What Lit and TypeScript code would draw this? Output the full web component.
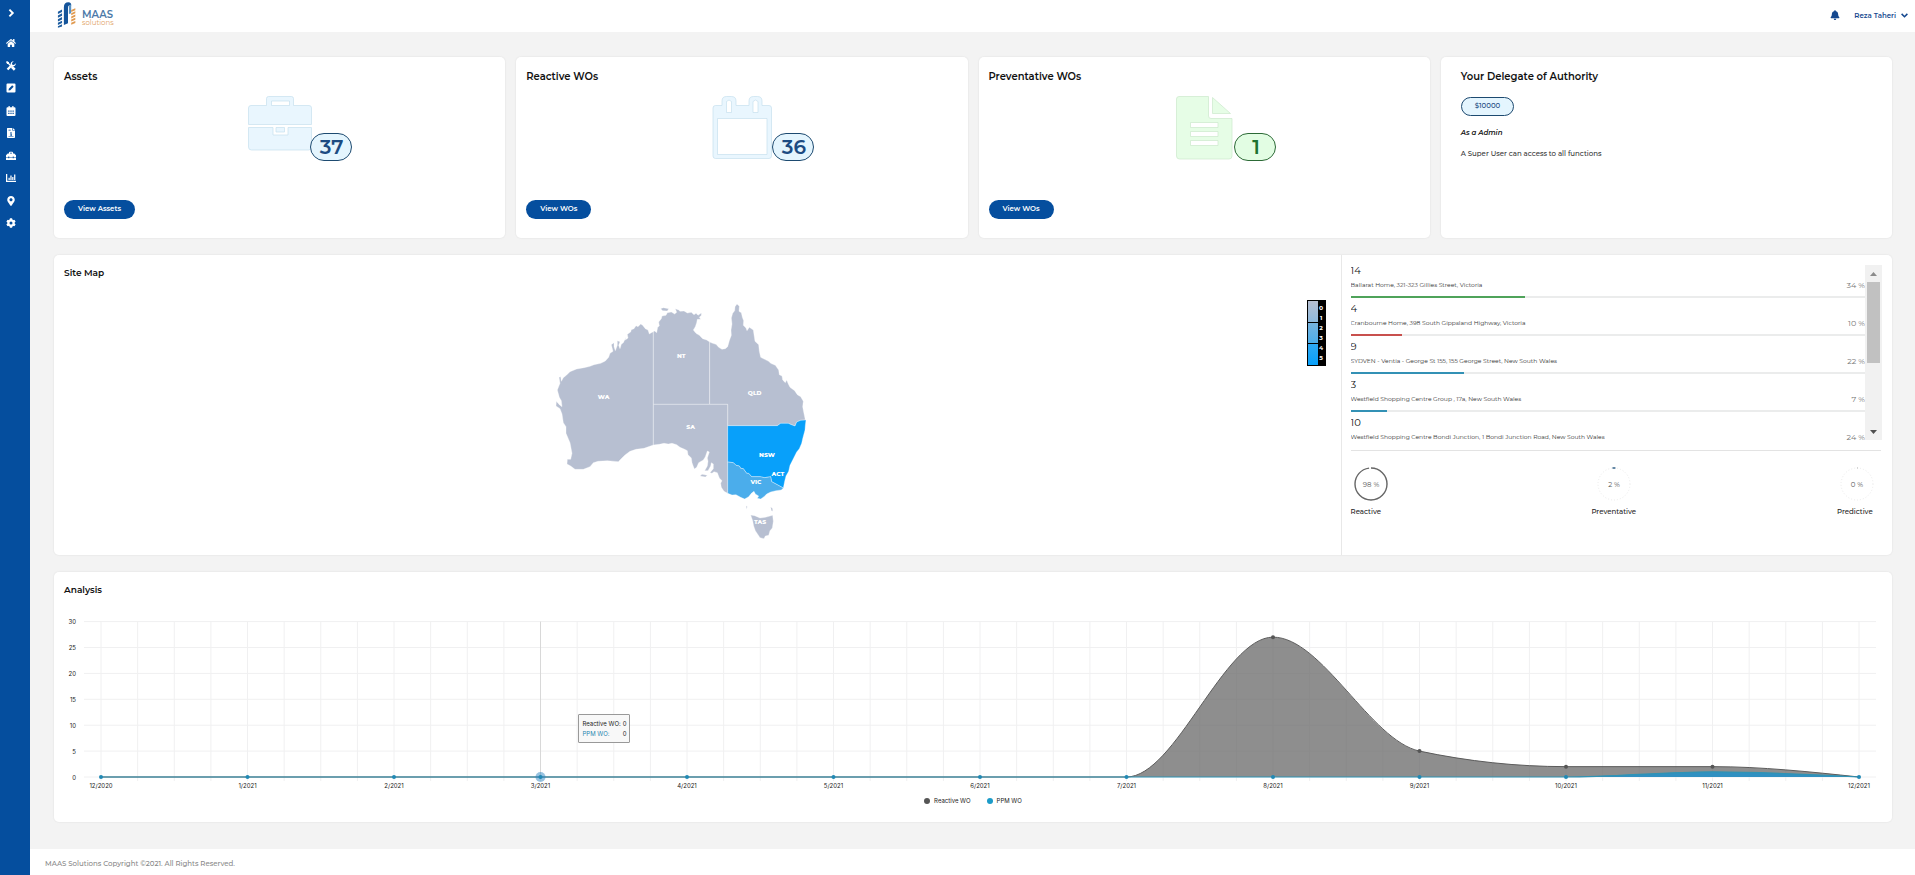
import { LitElement, html, svg, css } from "lit";
import { customElement } from "lit/decorators.js";
import { styleMap } from "lit/directives/style-map.js";

const FONT = css`Montserrat, Inter, "Open Sans", sans-serif`;
const CHART_FONT = css`Inter, "Liberation Sans", sans-serif`;

/* ---------- icons ---------- */
const icons = {
  chevronRight: svg`<svg viewBox="0 0 10 10" class="icon"><path d="M3.4 1.6 6.8 5 3.4 8.4" fill="none" stroke="currentColor" stroke-width="1.9"/></svg>`,
  chevronDown: svg`<svg viewBox="0 0 10 10" class="icon"><path d="M1.8 3.2 5 6.4 8.2 3.2" fill="none" stroke="currentColor" stroke-width="1.7"/></svg>`,
  home: svg`<svg viewBox="0 0 576 512" class="icon"><path fill="currentColor" d="M280.37 148.26L96 300.11V464a16 16 0 0 0 16 16l112.06-.29a16 16 0 0 0 15.92-16V368a16 16 0 0 1 16-16h64a16 16 0 0 1 16 16v95.64a16 16 0 0 0 16 16.05L464 480a16 16 0 0 0 16-16V300L295.67 148.26a12.19 12.19 0 0 0-15.3 0zM571.6 251.47L488 182.56V44.05a12 12 0 0 0-12-12h-56a12 12 0 0 0-12 12v72.61L318.47 43a48 48 0 0 0-61 0L4.34 251.47a12 12 0 0 0-1.6 16.9l25.5 31A12 12 0 0 0 45.15 301l235.22-193.74a12.19 12.19 0 0 1 15.3 0L530.9 301a12 12 0 0 0 16.9-1.6l25.5-31a12 12 0 0 0-1.7-16.93z"/></svg>`,
  tools: svg`<svg viewBox="0 0 20 20" class="icon"><g fill="none" stroke="currentColor"><path d="M3 3 9 9" stroke-width="2.6"/><path d="M11.5 11.5 17.5 17.5" stroke-width="5"/><path d="M3 17.2 12 8" stroke-width="4.4"/></g><path fill="currentColor" d="M0 2 2 0l4 2.4V5L5 6H2.400zM19.600 4.500 16 8l-3.500-.6L12 4l3.500-3.600A6 6 0 0 0 9.500 8l3 3a6 6 0 0 0 7.100-6.500z"/></svg>`,
  pen: svg`<svg viewBox="0 0 20 20" class="icon"><path fill="currentColor" fill-rule="evenodd" d="M3 1h14a2 2 0 0 1 2 2v14a2 2 0 0 1-2 2H3a2 2 0 0 1-2-2V3a2 2 0 0 1 2-2zM5 15l3.500-.6 6.800-6.800-2.900-2.900-6.800 6.800z"/></svg>`,
  calendar: svg`<svg viewBox="0 0 20 20" class="icon"><path fill="currentColor" fill-rule="evenodd" d="M5 0h2.500v2.500h5V0H15v2.500h2a2 2 0 0 1 2 2V18a2 2 0 0 1-2 2H3a2 2 0 0 1-2-2V4.500a2 2 0 0 1 2-2h2zM4.500 9v2.500H7V9zm4.300 0v2.500h2.400V9zM13 9v2.500h2.500V9zm-8.500 4.500V16H7v-2.500zm4.300 0V16h2.400v-2.500zm4.200 0V16h2.500v-2.500z"/></svg>`,
  invoice: svg`<svg viewBox="0 0 20 20" class="icon"><path fill="currentColor" fill-rule="evenodd" d="M3 0h9.500v5H18v13.500a1.500 1.500 0 0 1-1.500 1.500h-13A1.500 1.500 0 0 1 2 18.500V1a1 1 0 0 1 1-1zm10.800 0L18 4h-4.200zM5 3.500V5h4.500V3.500zM8 9v2h4V9zm1 3v4h2.500v-4zM5 17v1h10v-1z"/></svg>`,
  toolbox: svg`<svg viewBox="0 0 20 20" class="icon"><path fill="currentColor" fill-rule="evenodd" d="M6 5V3.500A2 2 0 0 1 8 1.500h4a2 2 0 0 1 2 2V5h2.500L20 8.500V12h-4.500v-1.200h-2V12h-7v-1.200h-2V12H0V8.500L3.500 5zm2 0h4V3.500H8zM0 13.200h4.500v1.300h2v-1.300h7v1.300h2v-1.300H20V18H0z"/></svg>`,
  chart: svg`<svg viewBox="0 0 20 20" class="icon"><path fill="currentColor" d="M0 2h2.500v13.500H20V18H0zM5 9.500h2.500v4.500H5zM8.700 5h2.500v9H8.700zM12.400 8h2.500v6h-2.500zM16.200 3h2.500v11h-2.500z"/></svg>`,
  pin: svg`<svg viewBox="-64 0 512 512" class="icon"><path fill="currentColor" d="M172.268 501.67C26.97 291.031 0 269.413 0 192 0 85.961 85.961 0 192 0s192 85.961 192 192c0 77.413-26.97 99.031-172.268 309.67-9.535 13.774-29.93 13.773-39.464 0zM192 272c44.183 0 80-35.817 80-80s-35.817-80-80-80-80 35.817-80 80 35.817 80 80 80z"/></svg>`,
  gear: svg`<svg viewBox="0 0 20 20" class="icon"><g fill="none" stroke="currentColor"><circle cx="10" cy="10" r="5.200" stroke-width="4.400"/><path stroke-width="4.600" d="M10 .6v4M10 15.400v4M1.900 5.300l3.400 2M14.700 12.700l3.400 2M1.900 14.700l3.400-2M14.700 7.300l3.400-2"/></g></svg>`,
  bell: svg`<svg viewBox="0 0 448 512" class="icon"><path fill="currentColor" d="M224 512c35.32 0 63.97-28.65 63.97-64H160.03c0 35.35 28.65 64 63.97 64zm215.39-149.71c-19.32-20.76-55.47-51.99-55.47-154.29 0-77.7-54.48-139.9-127.94-155.16V32c0-17.67-14.32-32-31.98-32s-31.98 14.33-31.98 32v20.84C118.56 68.1 64.08 130.3 64.08 208c0 102.3-36.15 133.53-55.47 154.29-6 6.45-8.66 14.16-8.61 21.71.11 16.4 12.98 32 32.1 32h383.8c19.12 0 32-15.6 32.1-32 .05-7.55-2.61-15.27-8.61-21.71z"/></svg>`,
};

const art = {
  briefcase: svg`<svg viewBox="0 0 64 64" class="art blue"><path d="M.5 28.500V12q0-2.500 2.500-2.500h15.500V2.500q0-2 2-2H43.500q2 0 2 2v7H61q2.500 0 2.500 2.500v16.500zM23.500 5v4.500h18V5z"/><path d="M.5 31.500H25v7.500h15v-7.500h23.500V51q0 3-3 3h-57q-3 0-3-3z"/><path d="M28 31.500h8.500v4.500H28z"/></svg>`,
  calendar: svg`<svg viewBox="0 0 64 64" class="art blue"><path fill-rule="evenodd" d="M3 12q0-2.500 2.500-2.500H12V5q0-4.500 4.500-4.500h5Q26 .5 26 5v4.500h13V5q0-4.500 4.500-4.500h4Q52 .5 52 5v4.500h7q2.500 0 2.500 2.500v48q0 2.500-2.500 2.500H5.500Q3 62.500 3 60zM16.500 16.500h5v-11q-2.500-3-5 0zM43 16.500h5v-11q-2.500-3-5 0zM7.500 22.500v36h49.500v-36z"/></svg>`,
  file: svg`<svg viewBox="0 0 64 64" class="art green"><path fill-rule="evenodd" d="M4.500 3q0-2.500 2.500-2.500h29.500V20q0 2.500 2.500 2.500h21V60q0 3-3 3H7.500q-3 0-3-3zM18.500 26.500v5H46v-5zM18.500 35.500v5H46v-5zM18.500 44.500v5H46v-5z"/><path d="M40.500 1.500v16h18z"/></svg>`,
};

/* Three towers: striped blue, solid blue with a curved crown, striped orange. */
const logo = svg`<svg viewBox="0 0 24 30" class="logo-mark">
  <path fill="#1c5c9f" d="M1 11.500l4.500-2.500v2.600L1 14zM1 15.500l4.500-2.300v2.600L1 18zM1 19.500l4.500-2.300v2.600L1 22zM1 23.500l4.500-2.300v2.600L1 26zM1 27.200l4.500-2v2.300L1 29z"/>
  <path fill="#14549a" d="M7.500 6.500Q7.500 1 12.500 1q3 0 3 3.500h-2q-1.500 0-1.500 2.500v17l-4.500 2z"/>
  <path fill="#5b93c4" d="M13 6.500q0-3 2.500-3v9.500L13 14z"/>
  <path fill="#e09a50" d="M15.500 9.500l4.500-2v2.200l-4.500 2zM15.500 13l4.500-2v2.200l-4.500 2zM15.500 16.500l4.500-2v2.200l-4.500 2zM15.500 20l4.500-2v2.200l-4.500 2zM15.500 23.500l4.500-2v2.200l-4.500 2z"/>
</svg>`;

/* ---------- data ---------- */
const navItems: [string, unknown][] = [
  ["Home", icons.home],
  ["Work orders", icons.tools],
  ["Edit", icons.pen],
  ["Calendar", icons.calendar],
  ["Invoices", icons.invoice],
  ["Assets", icons.toolbox],
  ["Reports", icons.chart],
  ["Sites", icons.pin],
  ["Settings", icons.gear],
];

const stats = [
  { title: "Assets", value: 37, action: "View Assets", art: art.briefcase, tone: "blue" },
  { title: "Reactive WOs", value: 36, action: "View WOs", art: art.calendar, tone: "blue" },
  { title: "Preventative WOs", value: 1, action: "View WOs", art: art.file, tone: "green" },
];

const sites = [
  { count: 14, name: "Ballarat Home, 321-323 Gillies Street, Victoria", share: 34, color: "#4fa35a" },
  { count: 4, name: "Cranbourne Home, 398 South Gippsland Highway, Victoria", share: 10, color: "#c8504d" },
  { count: 9, name: "SYDVEN - Ventia - George St 155, 155 George Street, New South Wales", share: 22, color: "#3391b5" },
  { count: 3, name: "Westfield Shopping Centre Group , 17a, New South Wales", share: 7, color: "#3391b5" },
  { count: 10, name: "Westfield Shopping Centre Bondi Junction, 1 Bondi Junction Road, New South Wales", share: 24, color: "#3391b5" },
];

const rings = [
  { label: "Reactive", value: 98, color: "#666" },
  { label: "Preventative", value: 2, color: "#36648b" },
  { label: "Predictive", value: 0, color: "#aaa" },
];

const regions = [
  { name: "WA", x: 221, y: 350, fill: "#b7bfd1", d: "M370 155 364 158 358 162 354 150 346 146 338 136 332 132 324 140 318 137 312 146 304 149 302 156 292 163 294 174 286 180 288 172 280 188 274 193 270 206 266 196 270 185 262 182 262 196 256 212 252 200 252 188 244 194 249 214 240 220 236 232 226 243 212 250 192 254 180 259 162 263 140 267 120 275 110 285 100 293 94 304 92 290 87 292 90 310 82 330 88 352 94 362 96 380 88 374 79 364 78 378 90 386 96 402 100 428 108 440 108 460 120 488 126 520 122 538 112 538 111 552 122 558 135 568 160 568 180 560 190 548 204 544 232 542 265 545 275 535 285 525 300 514 318 508 342 505 370 495z" },
  { name: "NT", x: 454, y: 228, fill: "#b7bfd1", d: "M370 155 374 153 380 158 383 142 388 138 386 126 394 116 396 108 408 106 412 98 424 96 434 102 440 97 436 86 446 90 450 94 462 93 472 99 484 97 492 104 498 100 504 106 514 99 514 106 508 112 512 118 502 118 500 128 496 140 490 150 498 160 508 166 518 176 530 180 539 186V373H370zM392 86 400 83 416 86 412 93 398 92z" },
  { name: "QLD", x: 674, y: 339, fill: "#b7bfd1", d: "M539 186 548 190 558 193 566 202 576 208 586 206 593 200 598 182 604 166 603 150 606 132 604 114 608 100 614 92 615 80 621 72 628 79 627 94 634 98 637 112 641 122 640 136 648 144 651 152 658 142 670 150 672 164 675 184 686 194 688 214 692 232 704 238 716 244 722 250 736 256 746 270 748 284 756 288 758 300 766 308 770 300 775 312 780 322 794 332 802 344 812 350 820 364 818 380 821 396 826 420 812 421 800 426 795 438 784 434 775 430 752 430 742 437H593V373H539z" },
  { name: "SA", x: 482, y: 440, fill: "#b7bfd1", d: "M370 373H593V640L582 634 574 622 572 610 576 602 568 594 562 578 552 575 546 580 540 578 550 566 550 552 544 548 542 558 534 572 524 572 532 558 534 544 532 534 538 516 532 513 526 530 520 540 506 548 500 562 493 567 486 548 484 534 474 524 472 512 464 508 450 502 440 494 426 490 415 492 402 490 388 493 370 495zM510 588 516 583 532 586 526 591z" },
  { name: "NSW", x: 711, y: 524, fill: "#08a0fa", d: "M593 437H742L752 430 775 430 784 434 795 438 800 426 812 421 828 420 826 436 825 450 818 476 815 490 808 506 800 516 788 540 780 556 776 574 768 588 764 604 760 624 725 605 722 590 704 593 690 590 665 590 656 580 650 580 640 566 632 565 628 558 618 556 610 548 593 546z" },
  { name: "VIC", x: 678, y: 605, fill: "#4badeb", d: "M593 546 610 548 618 556 628 558 632 565 640 566 650 580 656 580 665 590 690 590 704 593 722 590 725 605 760 624 754 630 738 632 722 636 710 642 702 650 692 657 682 655 686 648 676 642 672 634 664 640 656 650 644 657 632 652 618 644 606 645 593 640z" },
  { name: "TAS", x: 690, y: 725, fill: "#b7bfd1", d: "M662 705 674 707 690 714 706 712 728 706 730 724 727 744 720 752 716 766 706 768 702 776 690 773 684 764 676 752 671 738 668 722zM648 677 652 680 650 688zM722 680 728 686 728 694 724 692z" },
];

const months = ["12/2020", "1/2021", "2/2021", "3/2021", "4/2021", "5/2021", "6/2021", "7/2021", "8/2021", "9/2021", "10/2021", "11/2021", "12/2021"];
const reactive = [0, 0, 0, 0, 0, 0, 0, 0, 27, 5, 2, 2, 0];
const ppm = [0, 0, 0, 0, 0, 0, 0, 0, 0, 0, 0, 1, 0];

/* ---------- chart geometry ---------- */
const STEP = 146.5;
const X0 = 37;
const BASE = 165;
const UNIT = 5.18;
const px = (i: number) => X0 + i * STEP;
const py = (v: number) => BASE - v * UNIT;

/** Monotone cubic through the values, one point a month. */
function curve(values: number[]): string {
  const n = values.length;
  const s = values.slice(1).map((v, i) => v - values[i]);
  const t = values.map((_, i) => {
    if (i === 0 || i === n - 1) return 0;
    const a = s[i - 1];
    const b = s[i];
    if (a * b <= 0) return 0;
    return Math.sign(a) * 2 * Math.min(Math.abs(a), Math.abs(b), Math.abs(a + b) / 4);
  });
  t[n - 1] = (3 * s[n - 2] - t[n - 2]) / 2;
  let d = `M${px(0)} ${py(values[0])}`;
  for (let i = 0; i < n - 1; i++) {
    d += `C${px(i + 1 / 3)} ${py(values[i] + t[i] / 3)} ${px(i + 2 / 3)} ${py(values[i + 1] - t[i + 1] / 3)} ${px(i + 1)} ${py(values[i + 1])}`;
  }
  return d;
}

@customElement("site-map")
export class SiteMap extends LitElement {
  static styles = css`
    :host { display: grid; grid-template-columns: 1fr 334px 1fr; padding: 0 15px; align-items: start; font-family: ${FONT}; }
    .map { grid-column: 2; display: block; width: 100%; }
    .map path { stroke: #fff; stroke-width: 1; stroke-linejoin: round; }
    .map text { font-size: 18px; font-weight: 800; fill: #fff; text-anchor: middle; dominant-baseline: central; }
    .legend { justify-self: end; display: grid; grid-template-columns: 10px 7px; padding: 1px; background: #000; color: #fff; }
    .scale { display: grid; grid-template-rows: repeat(3, 1fr); row-gap: 1px; }
    .scale span:nth-child(1) { background: linear-gradient(#b7bfd1, #8db9dd); }
    .scale span:nth-child(2) { background: linear-gradient(#76b3df, #4caeea); }
    .scale span:nth-child(3) { background: linear-gradient(#2ea9f4, #08a0fa); }
    .nums { display: grid; margin: 0; padding: 2px 0; list-style: none; font-size: 6px; line-height: 10px; font-weight: 700; text-align: center; }
  `;
  render() {
    return html`
      <svg class="map" viewBox="0 60 1002 738" role="img" aria-label="Map of Australia">
        ${regions.map((r) => svg`<path d=${r.d} fill=${r.fill}></path>`)}
        ${regions.map((r) => svg`<text x=${r.x} y=${r.y}>${r.name}</text>`)}
        <text x="744" y="582">ACT</text>
      </svg>
      <div class="legend">
        <div class="scale"><span></span><span></span><span></span></div>
        <ul class="nums">${[0, 1, 2, 3, 4, 5].map((n) => html`<li>${n}</li>`)}</ul>
      </div>`;
  }
}

@customElement("site-list")
export class SiteList extends LitElement {
  static styles = css`
    :host { display: block; font-family: ${FONT}; }
    .viewport { display: grid; grid-template: 100% / 1fr 17px; height: 175px; overflow: hidden; }
    .list { margin: 0; padding: 0; list-style: none; }
    .item { display: grid; grid-template-columns: 1fr auto; height: 38px; align-content: start; }
    .count { grid-column: 1 / -1; font-size: 10px; line-height: 12px; color: #111; }
    .name { font-size: 6px; line-height: 16px; color: #333; white-space: nowrap; }
    .share { font-size: 8px; line-height: 16px; color: #777; }
    .track { grid-column: 1 / -1; height: 2px; margin-top: 3px; background: #ebecec; }
    .fill { height: 100%; }
    .scroll { display: flex; flex-direction: column; background: #f1f1f1; }
    .arrow { display: grid; place-items: center; height: 17px; color: #505050; }
    .arrow svg { width: 7px; height: 4px; }
    .up { color: #8b8b8b; }
    .thumb { height: 81px; margin: 0 2px; background: #c1c1c1; }
    .down { margin-top: auto; }
    .rings { display: flex; justify-content: space-between; margin-right: 1px; border-top: 1px solid #e3e3e3; padding: 15px 4px 0 0; margin-top: 10px; }
    .ring { min-width: 40px; display: grid; }
    .ring svg { width: 40px; height: 36px; justify-self: center; }
    .ring text { font-size: 7px; fill: #555; text-anchor: middle; dominant-baseline: central; }
    .label { font-size: 7px; line-height: 20px; color: #222; font-weight: 500; }
  `;
  render() {
    return html`
      <div class="viewport">
        <ul class="list">
          ${sites.map((s) => html`<li class="item">
            <span class="count">${s.count}</span>
            <span class="name">${s.name}</span><span class="share">${s.share} %</span>
            <div class="track"><div class="fill" style=${styleMap({ width: `${s.share}%`, background: s.color })}></div></div>
          </li>`)}
        </ul>
        <div class="scroll" aria-hidden="true">
          <span class="arrow up"><svg viewBox="0 0 7 4"><path d="M0 4 3.500 0 7 4z" fill="currentColor"/></svg></span>
          <span class="thumb"></span>
          <span class="arrow down"><svg viewBox="0 0 7 4"><path d="M0 0h7L3.500 4z" fill="currentColor"/></svg></span>
        </div>
      </div>
      <div class="rings">
        ${rings.map((r) => html`<div class="ring">
          <svg viewBox="0 0 40 36">
            <circle cx="20" cy="18" r="16" fill="none" stroke="#ececec" stroke-dasharray="1 2"></circle>
            <circle cx="20" cy="18" r="16" fill="none" stroke=${r.color} stroke-width="1.400" pathLength="100"
              stroke-linecap=${r.value > 0 && r.value < 50 ? "round" : "butt"}
              stroke-dasharray="${Math.max(r.value, 0.6)} 100" transform="rotate(${-90 - (r.value < 50 ? r.value * 1.8 : 0)} 20 18)"></circle>
            <text x="20" y="18">${r.value} %</text>
          </svg>
          <span class="label">${r.label}</span>
        </div>`)}
      </div>`;
  }
}

@customElement("analysis-chart")
export class AnalysisChart extends LitElement {
  static styles = css`
    :host { display: block; position: relative; font-family: ${CHART_FONT}; }
    .plot { display: block; width: 100%; }
    .grid { stroke: #f0f0f1; stroke-width: 1; fill: none; }
    .cursor { stroke: #d8d8d8; stroke-width: 1; }
    .plot text { font-size: 6px; fill: #222; dominant-baseline: central; }
    .y { text-anchor: end; }
    .x { text-anchor: middle; }
    .legend { display: flex; justify-content: center; gap: 16px; font-size: 6px; line-height: 8px; color: #222; margin-top: 5px; }
    .key { display: flex; align-items: center; gap: 4px; }
    .dot { width: 6px; height: 6px; border-radius: 50%; background: #555; }
    .dot.ppm { background: #1c9bc8; }
    .tip { position: absolute; left: 28.3%; top: 102px; width: 52px; height: 29px; box-sizing: border-box; border: 1px solid #999; border-radius: 1px; background: #f8f8f8; padding: 4px 3px; font-size: 6px; line-height: 10px; color: #222; }
    .line { display: flex; justify-content: space-between; white-space: nowrap; }
    .line .ppm { color: #1f86b0; }
  `;
  render() {
    const area = (v: number[]) => `${curve(v)}V${BASE}H${px(0)}Z`;
    return html`
      <svg class="plot" viewBox="0 0 1818 180" role="img" aria-label="Work orders a month">
        ${[0, 5, 10, 15, 20, 25, 30].map((v) => svg`
          <path class="grid" d="M20 ${py(v)}H1812"></path>
          <text class="y" x="12" y=${py(v)}>${v}</text>`)}
        ${Array.from({ length: 49 }, (_, i) => svg`<path class="grid" d="M${px(i / 4)} ${py(30)}V${BASE + 4}"></path>`)}
        <path class="cursor" d="M${px(3)} ${py(30)}V${BASE}"></path>
        <path d=${area(reactive)} fill="#666" fill-opacity=".74"></path>
        <path d=${curve(reactive)} fill="none" stroke="#5b5b5b"></path>
        <path d=${area(ppm)} fill="#2690c6" fill-opacity=".9"></path>
        <path d=${curve(ppm)} fill="none" stroke="#2f93b4" stroke-width="1.200"></path>
        ${reactive.map((v, i) => (v ? svg`<circle cx=${px(i)} cy=${py(v)} r="2" fill="#555"></circle>` : ""))}
        <circle cx=${px(3)} cy=${BASE} r="5" fill="#2f86c1" fill-opacity=".5"></circle>
        ${ppm.map((v, i) => (v ? "" : svg`<circle cx=${px(i)} cy=${BASE} r="2" fill="#2089b5"></circle>`))}
        ${months.map((m, i) => svg`<text class="x" x=${px(i)} y="173">${m}</text>`)}
      </svg>
      <div class="legend">
        <span class="key"><span class="dot"></span>Reactive WO</span>
        <span class="key"><span class="dot ppm"></span>PPM WO</span>
      </div>
      <div class="tip">
        <div class="line"><span>Reactive WO:</span><span>0</span></div>
        <div class="line"><span class="ppm">PPM WO:</span><span>0</span></div>
      </div>`;
  }
}

@customElement("app-root")
export class AppRoot extends LitElement {
  static styles = css`
    :host { display: grid; grid-template-columns: 30px minmax(0, 1fr); min-height: 100vh; background: #f3f3f3; font-family: ${FONT}; color: #111; }
    button { font: inherit; border: 0; background: none; padding: 0; color: inherit; cursor: pointer; }
    a { color: inherit; text-decoration: none; }
    .icon { display: block; width: 10px; height: 10px; }
    .side { background: #054e9e; color: #fff; padding: 8px 6px; display: flex; flex-direction: column; gap: 20px; align-items: flex-start; }
    .nav { display: grid; height: 190px; align-content: space-between; }
    .page { display: flex; flex-direction: column; }
    .top { height: 32px; box-sizing: border-box; background: #fff; display: flex; align-items: center; justify-content: space-between; padding: 0 6px 2px 27px; }
    .logo { display: flex; align-items: center; gap: 3px; }
    .logo-mark { width: 22px; height: 28px; }
    .brand { display: grid; padding-top: 6px; font-size: 10px; line-height: 9px; font-weight: 600; color: #4b79a8; }
    .brand small { font-size: 7px; line-height: 8px; font-weight: 400; color: #e2a367; }
    .user { display: flex; align-items: center; gap: 14px; color: #15488f; }
    .name { display: flex; align-items: center; gap: 4px; font-size: 7px; font-weight: 600; }
    .name .icon { width: 9px; height: 9px; }
    .main { flex: 1; padding: 25px 23px 27px 24px; display: flex; flex-direction: column; gap: 17px; }
    .card { background: #fff; border-radius: 5px; box-shadow: 0 0 1px 1px #ececec; }
    .stats { display: grid; grid-template-columns: repeat(4, 1fr); gap: 11px; }
    .stat { height: 181px; box-sizing: border-box; padding: 13px 10px 19px; display: flex; flex-direction: column; align-items: flex-start; }
    .title { margin: 0; font-size: 10px; line-height: 14px; font-weight: 600; }
    .sub { font-size: 9px; }
    .figure { position: relative; align-self: center; margin-top: 12px; }
    .art { display: block; width: 64px; height: 64px; stroke-width: .7; }
    .art.blue { fill: #e9f6fe; stroke: #c6e0ee; }
    .art.green { fill: #e6fde6; stroke: #cbe8cc; }
    .value { position: absolute; left: 62px; top: 37px; width: 42px; height: 28px; box-sizing: border-box; border: 1px solid #1d4a70; border-radius: 14px; background: #e4f5fe; color: #1c4b82; font-size: 20px; line-height: 26px; font-weight: 600; text-align: center; padding-left: 2px; }
    .value.green { border-color: #2c6a36; background: #e2fde3; color: #1d7330; }
    .btn { margin-top: auto; height: 19px; padding: 0 14px 1px; border-radius: 10px; background: #054e9e; color: #fff; font-size: 7px; line-height: 18px; font-weight: 600; }
    .authority { padding-left: 20px; }
    .limit { margin-top: 13px; height: 19px; box-sizing: border-box; border: 1px solid #1d4a70; border-radius: 10px; background: #e4f5fe; color: #1c4b82; font-size: 7px; line-height: 16px; font-weight: 500; padding: 0 13px; }
    .role { margin: 12px 0 0; font-size: 7px; line-height: 10px; font-style: italic; font-weight: 600; }
    .note { margin: 11px 0 0; font-size: 7px; line-height: 10px; font-weight: 500; color: #333; }
    .sites { display: grid; grid-template-columns: 7fr 3fr; height: 300px; }
    .sites .title { padding: 11px 10px 20px; }
    .panel { border-left: 1px solid #e8e8e8; padding: 10px 10px 0 9px; }
    .analysis { height: 250px; box-sizing: border-box; padding: 11px 10px; }
    .analysis .title { padding-bottom: 15px; }
    .foot { height: 26px; background: #fff; padding: 0 15px; font-size: 7px; line-height: 29px; font-weight: 500; color: #888; }
  `;
  render() {
    return html`
      <aside class="side">
        <button aria-label="Expand menu">${icons.chevronRight}</button>
        <nav class="nav">${navItems.map(([label, icon]) => html`<a href="#" aria-label=${label}>${icon}</a>`)}</nav>
      </aside>
      <div class="page">
        <header class="top">
          <a class="logo" href="#">${logo}<span class="brand">MAAS<small>solutions</small></span></a>
          <div class="user">
            <button aria-label="Notifications">${icons.bell}</button>
            <button class="name">Reza Taheri ${icons.chevronDown}</button>
          </div>
        </header>
        <main class="main">
          <section class="stats">
            ${stats.map((s) => html`<article class="card stat">
              <h2 class="title">${s.title}</h2>
              <div class="figure">${s.art}<span class="value ${s.tone}">${s.value}</span></div>
              <button class="btn">${s.action}</button>
            </article>`)}
            <article class="card stat authority">
              <h2 class="title">Your Delegate of Authority</h2>
              <span class="limit">$10000</span>
              <p class="role">As a Admin</p>
              <p class="note">A Super User can access to all functions</p>
            </article>
          </section>
          <section class="card sites">
            <div><h2 class="title sub">Site Map</h2><site-map></site-map></div>
            <site-list class="panel"></site-list>
          </section>
          <section class="card analysis">
            <h2 class="title sub">Analysis</h2>
            <analysis-chart></analysis-chart>
          </section>
        </main>
        <footer class="foot">MAAS Solutions Copyright ©2021. All Rights Reserved.</footer>
      </div>`;
  }
}
